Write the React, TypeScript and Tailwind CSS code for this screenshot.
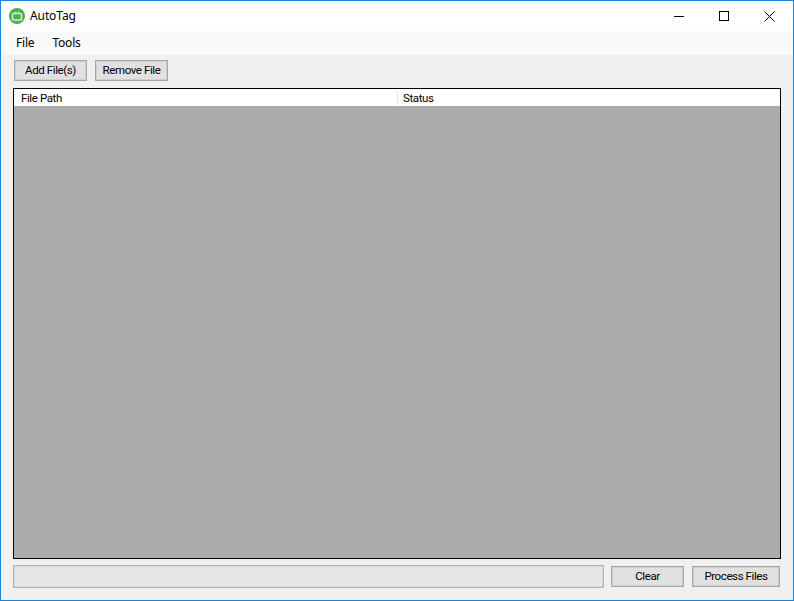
const font = "font-['Noto_Sans',sans-serif]";
const controlFont = "font-['Roboto',sans-serif] text-[11.5px] tracking-[-0.4px]";

function WinButton({ className, children }: { className: string; children: string }) {
  return (
    <button
      type="button"
      className={`flex h-[21px] items-center justify-center border border-[#a6a6a6] bg-[#e1e1e1] pt-[1px] leading-none text-black shadow-[inset_0_0_0_1px_#cfcfcf] ${controlFont} ${className}`}
    >
      {children}
    </button>
  );
}

export default function App() {
  return (
    <div className={`flex h-[601px] w-[794px] flex-col overflow-hidden border border-[#1883d7] bg-[#f0f0f0] text-[12px] text-black ${font}`}>
      {/* Title bar */}
      <div className="flex h-[30px] shrink-0 items-center bg-white pl-[8px]">
        <svg width="16" height="16" viewBox="0 0 16 16">
          <circle cx="8" cy="8" r="8" fill="#4caf50" />
          <rect x="3.5" y="5.5" width="9" height="6.5" rx="1" fill="none" stroke="#d9efd9" strokeWidth="1.5" />
          <path d="M6 3.5 7.5 5.5M10 3.5 8.5 5.5" stroke="#d9efd9" strokeWidth="1" />
        </svg>
        <span className="ml-[5px] tracking-[-0.1px]">AutoTag</span>
        <div className="ml-auto flex items-center">
          <svg width="10" height="10" viewBox="0 0 10 10" className="mr-[35px]">
            <path d="M0 5.5H10" stroke="#000" strokeWidth="1" />
          </svg>
          <svg width="10" height="10" viewBox="0 0 10 10" className="mr-[35px]">
            <rect x="0.5" y="0.5" width="9" height="9" fill="none" stroke="#000" strokeWidth="1" />
          </svg>
          <svg width="11" height="11" viewBox="0 0 11 11" className="mr-[18px]">
            <path d="M0.5 0.5 10.5 10.5M10.5 0.5 0.5 10.5" stroke="#000" strokeWidth="1" />
          </svg>
        </div>
      </div>

      {/* Menu */}
      <div className="flex h-[24px] shrink-0 items-center gap-[18px] bg-[#f9f9f9] pl-[15px] tracking-[-0.2px]">
        <span>File</span>
        <span>Tools</span>
      </div>

      {/* Toolbar */}
      <div className="flex shrink-0 gap-[8px] pl-[13px] pt-[5px]">
        <WinButton className="w-[73px]">Add File(s)</WinButton>
        <WinButton className="w-[73px]">Remove File</WinButton>
      </div>

      {/* File list */}
      <div className="mx-[12px] mt-[7px] flex min-h-0 flex-1 flex-col border border-black bg-[#ababab]">
        <div className={`flex h-[17px] shrink-0 items-center bg-white pt-[2px] ${controlFont}`}>
          <div className="flex h-full w-[384px] items-center border-r border-[#e5e5e5] pl-[7px]">File Path</div>
          <div className="pl-[5px]">Status</div>
        </div>
      </div>

      {/* Footer */}
      <div className="flex h-[41px] shrink-0 items-start pl-[12px] pt-[6px]">
        <div className="h-[23px] w-[591px] border border-[#b4b4b4] bg-[#e6e6e6] shadow-[inset_0_0_0_1px_#d6d6d6]" />
        <WinButton className="ml-[7px] mt-[1px] w-[73px]">Clear</WinButton>
        <WinButton className="ml-[8px] mt-[1px] w-[88px]">Process Files</WinButton>
      </div>
    </div>
  );
}
